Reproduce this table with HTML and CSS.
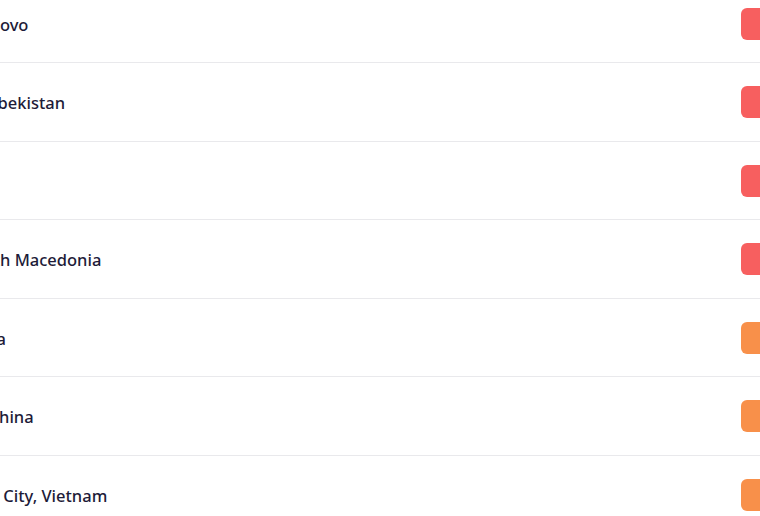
FILE: index.html
```html
<!DOCTYPE html>
<html lang="en">
<head>
  <meta charset="UTF-8" />
  <meta name="viewport" content="width=device-width, initial-scale=1.0"/>
  <title>Locations</title>
  <link rel="stylesheet" href="styles.css">
</head>
<body>
  <div class="table">
    <div class="row">
      <div class="name">Pristina, Kosovo</div>
      <div class="badge red"></div>
    </div>
    <div class="row">
      <div class="name">Bukhara, Uzbekistan</div>
      <div class="badge red"></div>
    </div>
    <div class="row">
      <div class="name"></div>
      <div class="badge red"></div>
    </div>
    <div class="row">
      <div class="name">Skopje, North Macedonia</div>
      <div class="badge red"></div>
    </div>
    <div class="row">
      <div class="name">Accra, Ghana</div>
      <div class="badge orange"></div>
    </div>
    <div class="row">
      <div class="name">Shenzhen, China</div>
      <div class="badge orange"></div>
    </div>
    <div class="row">
      <div class="name">Ho Chi Minh City, Vietnam</div>
      <div class="badge orange"></div>
    </div>
  </div>
</body>
</html>
```

FILE: styles.css
```css
body {
  margin: 0;
  background: #fff;
  font-family: 'Noto Sans', 'Open Sans', sans-serif;
  overflow: hidden;
  height: 516px;
}

.table {
  width: 910px;
  margin: -15.25px 0 0 -97.5px;
}

.row {
  display: flex;
  align-items: center;
  justify-content: space-between;
  padding: 22.75px 16px 22.75px 0;
  border-bottom: 1px solid #e9e9ec;
}

.name {
  flex: 1;
  font-size: 16.5px;
  font-weight: 500;
  color: #1d1b38;
  white-space: nowrap;
  padding-top: 1px;
}

.badge {
  flex: none;
  width: 56px;
  height: 32px;
  border-radius: 6px;
}

.badge.red {
  background: #f75f5f;
}

.badge.orange {
  background: #f8904a;
}
```
